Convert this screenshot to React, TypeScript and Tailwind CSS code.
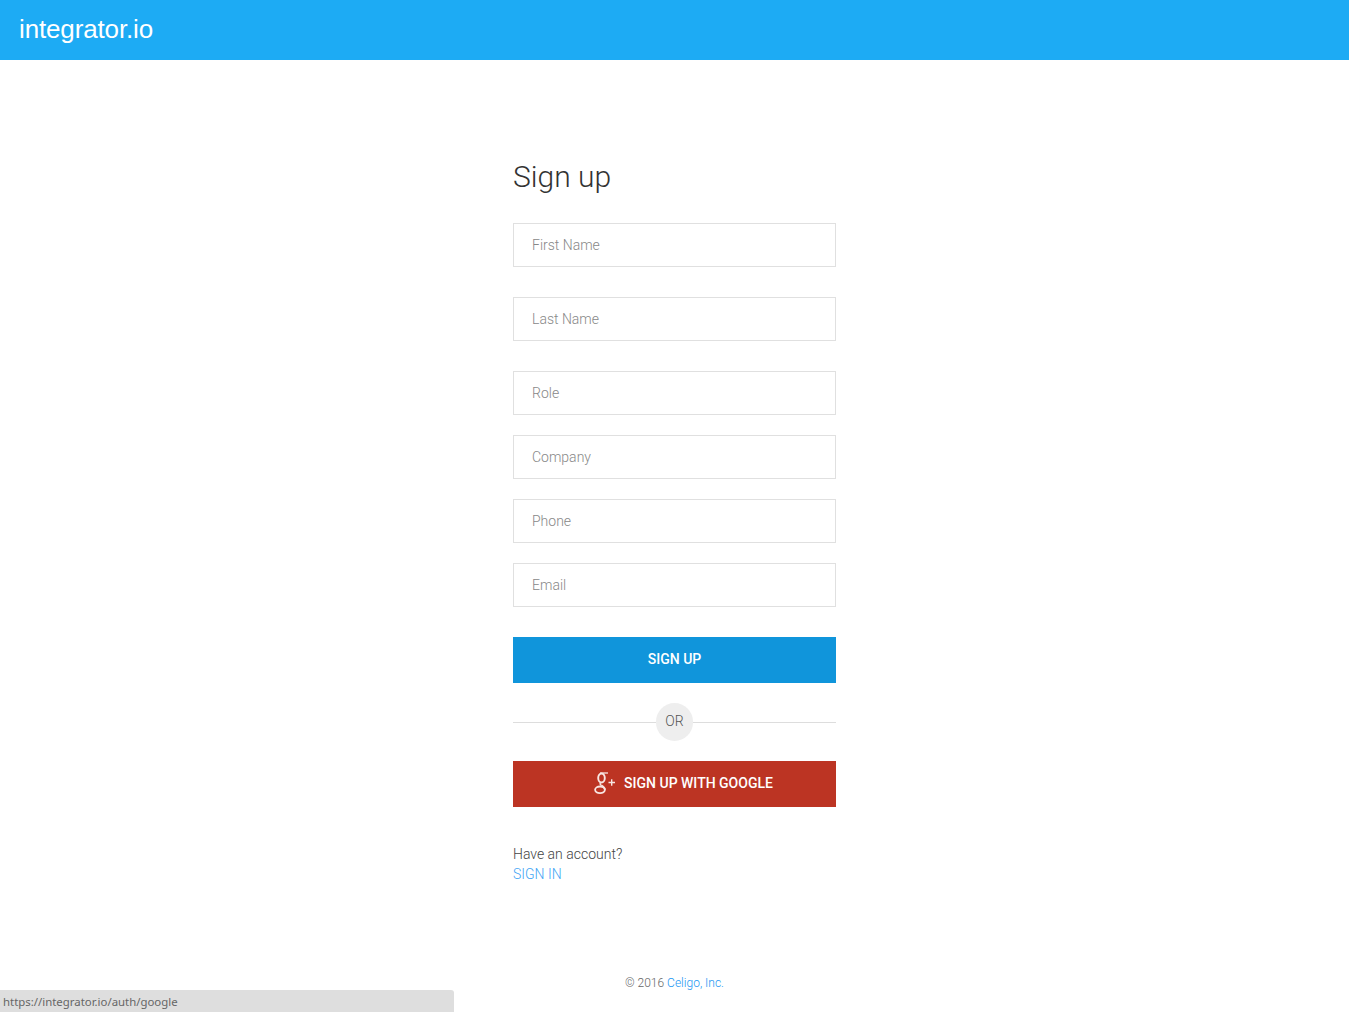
const fields = [
  { placeholder: "First Name", margin: "mb-[30px]" },
  { placeholder: "Last Name", margin: "mb-[30px]" },
  { placeholder: "Role", margin: "mb-5" },
  { placeholder: "Company", margin: "mb-5" },
  { placeholder: "Phone", margin: "mb-5" },
  { placeholder: "Email", margin: "mb-[30px]" },
];

const GooglePlusIcon = () => (
  <svg width="21" height="22" viewBox="0 0 21 22" fill="none" stroke="#f8e6e2" className="shrink-0">
    <ellipse cx="7.500" cy="6" rx="3.300" ry="4.500" strokeWidth="1.900" />
    <path d="M6 1h8" strokeWidth="1.300" />
    <path d="M6.500 10.800c-.8 1-.3 1.800.8 2.500" strokeWidth="1.400" />
    <ellipse cx="6" cy="17.800" rx="4.900" ry="3.300" strokeWidth="1.800" />
    <path d="M7.300 13.300c2 1.200 3.600 2.200 3.600 4.500" strokeWidth="1.800" />
    <path d="M14.500 10.500h6.500M17.700 7.300v6.400" strokeWidth="1.400" />
  </svg>
);

export default function App() {
  return (
    <div className="relative min-h-[1012px] bg-white font-['Roboto',sans-serif] font-light text-[#333]">
      <header className="flex h-[60px] items-center bg-[#1dabf4] pl-[19px] pb-[2px]">
        <span className="font-['Liberation_Sans',sans-serif] text-[26px] font-normal tracking-[-0.14px] text-white">
          integrator.io
        </span>
      </header>

      <main className="mx-auto w-[323px] pt-[97px]">
        <h1 className="mb-[27px] h-[39px] text-[30px] leading-[39px] font-light text-[#333]">Sign up</h1>

        {fields.map((f) => (
          <input
            key={f.placeholder}
            type="text"
            placeholder={f.placeholder}
            className={`block h-11 w-full border border-[#e0e0e0] bg-white px-[18px] text-sm font-light outline-none placeholder:text-[#888] ${f.margin}`}
          />
        ))}

        <button className="block h-[46px] w-full bg-[#1095db] pb-[2px] text-sm font-medium text-white">SIGN UP</button>

        <div className="relative my-5 flex h-[38px] items-center justify-center">
          <div className="absolute inset-x-0 top-[19px] h-px bg-[#ddd]" />
          <div className="relative flex h-[38px] w-[37px] items-center justify-center rounded-full bg-[#eee] pb-[2px] text-sm text-[#555]">
            OR
          </div>
        </div>

        <button className="flex h-[46px] w-full items-center justify-center gap-[9px] bg-[#bc3423] pb-[2px] pl-[18px] text-sm font-medium text-white">
          <GooglePlusIcon />
          SIGN UP WITH GOOGLE
        </button>

        <div className="mt-[37px] text-sm leading-5">
          <p className="text-[#444]">Have an account?</p>
          <a className="text-[#42a5f5]">SIGN IN</a>
        </div>

        <footer className="mt-[91px] text-center text-xs leading-4 text-[#666]">
          © 2016 <a className="text-[#2196f3]">Celigo, Inc.</a>
        </footer>
      </main>

      <div className="absolute bottom-0 left-0 flex h-[22px] w-[454px] items-center rounded-tr-[3px] bg-[#dedede] pl-[3px] pt-[2px] font-['Noto_Sans',sans-serif] text-[11.4px] font-normal text-[#666]">
        https://integrator.io/auth/google
      </div>
    </div>
  );
}
